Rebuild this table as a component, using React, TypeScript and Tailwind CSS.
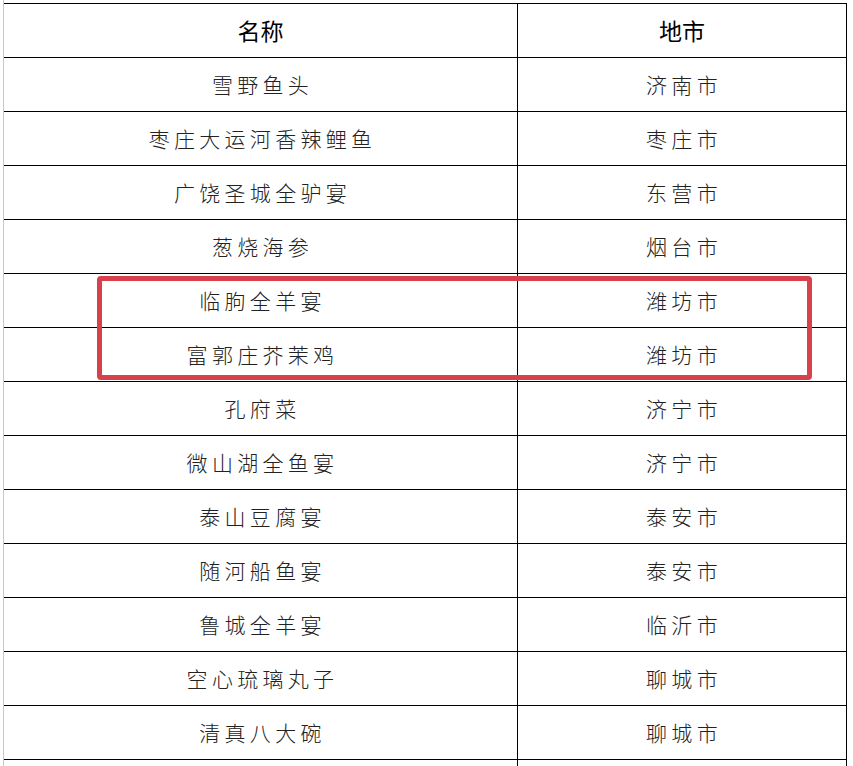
import React from "react";

const rows: [string, string][] = [
  ["雪野鱼头", "济南市"],
  ["枣庄大运河香辣鲤鱼", "枣庄市"],
  ["广饶圣城全驴宴", "东营市"],
  ["葱烧海参", "烟台市"],
  ["临朐全羊宴", "潍坊市"],
  ["富郭庄芥茉鸡", "潍坊市"],
  ["孔府菜", "济宁市"],
  ["微山湖全鱼宴", "济宁市"],
  ["泰山豆腐宴", "泰安市"],
  ["随河船鱼宴", "泰安市"],
  ["鲁城全羊宴", "临沂市"],
  ["空心琉璃丸子", "聊城市"],
  ["清真八大碗", "聊城市"],
];

const font = { fontFamily: '"Noto Sans CJK SC", "Noto Sans", sans-serif' };

export default function App() {
  return (
    <div className="relative w-[853px] h-[766px] overflow-hidden bg-white" style={font}>
      <div className="absolute left-[3px] top-0 h-full w-px bg-[#c8c8c8]" />
      <div className="pt-[3px] pl-[4px]">
        <div className="w-[843px] border-t border-r border-black">
          <div className="flex h-[54px] border-b border-black">
            <div className="w-[514px] flex items-center justify-center border-r border-black text-[23px] font-normal text-black">
              名称
            </div>
            <div className="flex-1 flex items-center justify-center text-[23px] font-normal text-black">
              地市
            </div>
          </div>
          {rows.map(([name, city], i) => (
            <div key={i} className="flex h-[54px] border-b border-black">
              <div className="w-[514px] flex items-center justify-center border-r border-black text-[21px] text-[#222] tracking-[4.3px] pl-[4px] font-light">
                {name}
              </div>
              <div className="flex-1 flex items-center justify-center text-[21px] text-[#222] tracking-[4.3px] pl-[4px] font-light">
                {city}
              </div>
            </div>
          ))}
          <div className="flex h-[54px]">
            <div className="w-[514px] border-r border-black" />
            <div className="flex-1" />
          </div>
        </div>
      </div>
      <div className="absolute left-[97px] top-[276px] w-[715px] h-[104px] border-[5px] border-[#d8414c] rounded-[4px]" />
    </div>
  );
}
